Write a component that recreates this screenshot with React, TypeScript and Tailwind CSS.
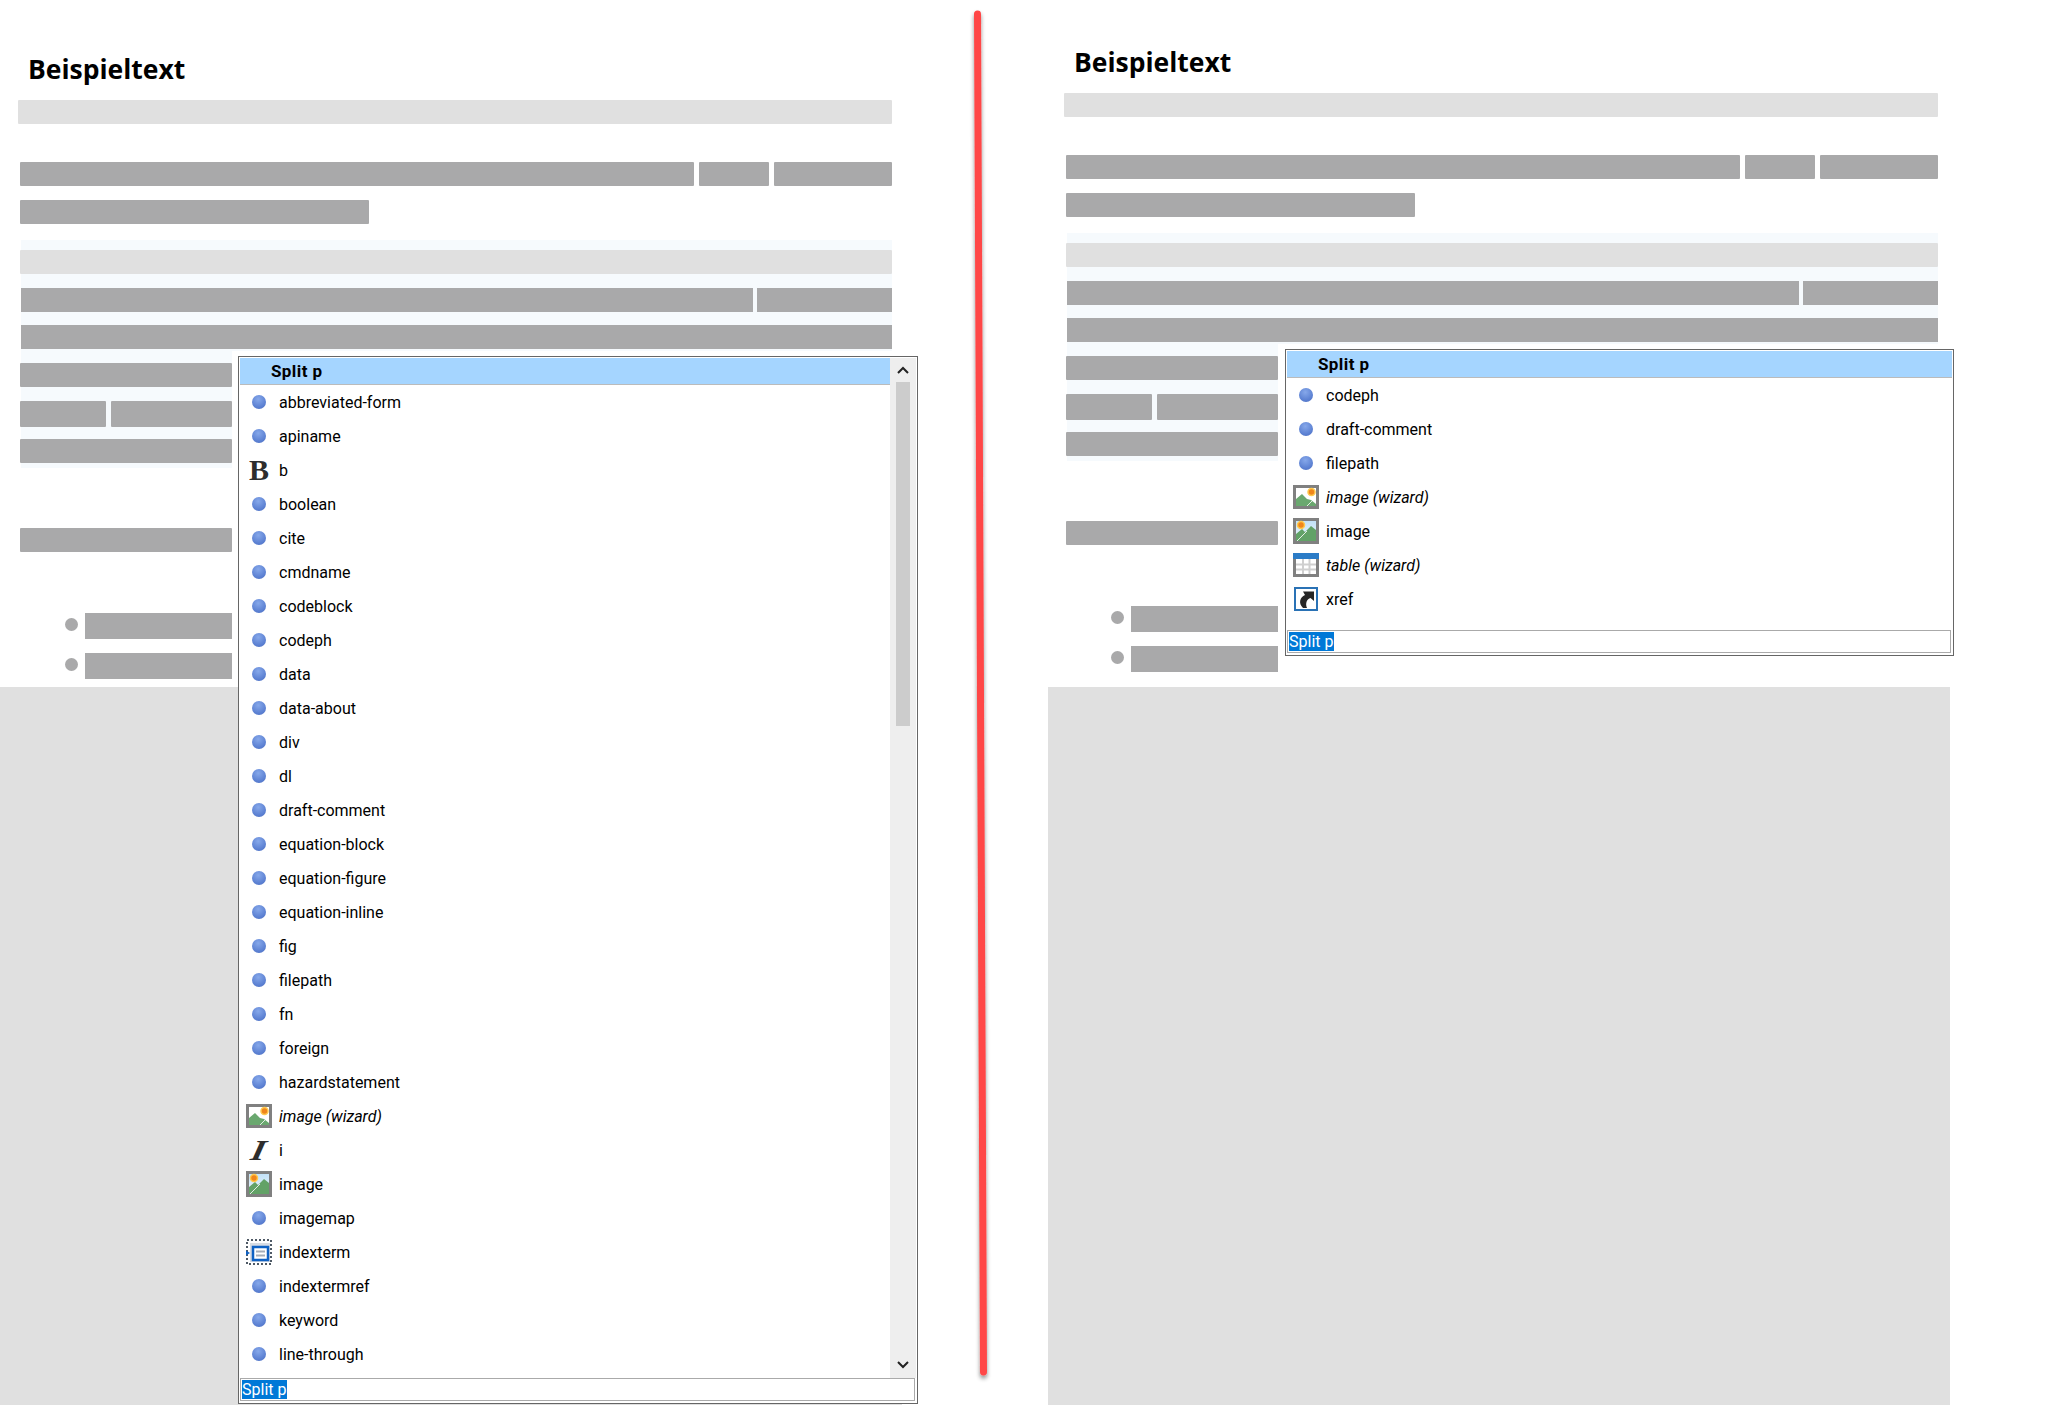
const uiFont = "font-['Roboto','Noto_Sans',sans-serif]";

type Item = {
  name: string;
  icon?: 'dot' | 'b' | 'i' | 'wizardImage' | 'image' | 'indexterm' | 'table' | 'xref';
  italic?: boolean;
};

const leftItems: Item[] = [
  { name: 'abbreviated-form' },
  { name: 'apiname' },
  { name: 'b', icon: 'b' },
  { name: 'boolean' },
  { name: 'cite' },
  { name: 'cmdname' },
  { name: 'codeblock' },
  { name: 'codeph' },
  { name: 'data' },
  { name: 'data-about' },
  { name: 'div' },
  { name: 'dl' },
  { name: 'draft-comment' },
  { name: 'equation-block' },
  { name: 'equation-figure' },
  { name: 'equation-inline' },
  { name: 'fig' },
  { name: 'filepath' },
  { name: 'fn' },
  { name: 'foreign' },
  { name: 'hazardstatement' },
  { name: 'image (wizard)', icon: 'wizardImage', italic: true },
  { name: 'i', icon: 'i' },
  { name: 'image', icon: 'image' },
  { name: 'imagemap' },
  { name: 'indexterm', icon: 'indexterm' },
  { name: 'indextermref' },
  { name: 'keyword' },
  { name: 'line-through' },
];

const rightItems: Item[] = [
  { name: 'codeph' },
  { name: 'draft-comment' },
  { name: 'filepath' },
  { name: 'image (wizard)', icon: 'wizardImage', italic: true },
  { name: 'image', icon: 'image' },
  { name: 'table (wizard)', icon: 'table', italic: true },
  { name: 'xref', icon: 'xref' },
];

const ItemIcon = ({ icon = 'dot' }: { icon?: Item['icon'] }) => {
  if (icon === 'b') {
    return <span className="font-['Liberation_Serif',serif] text-[30px] leading-none font-bold text-[#2d2d2d]">B</span>;
  }
  if (icon === 'i') {
    return (
      <span className="scale-x-125 skew-x-[-10deg] font-['Liberation_Serif',serif] text-[29px] leading-none font-bold italic text-[#2d2d2d]">
        I
      </span>
    );
  }
  if (icon === 'wizardImage') {
    return (
      <svg width="26" height="24" viewBox="0 0 26 24">
        <rect x="1.5" y="1.5" width="23" height="21" fill="#fff" stroke="#808080" strokeWidth="3" />
        <path d="M3 21V14L9 9L14 14L18 15L23 19V21Z" fill="#6aa86f" />
        <path d="M14 21L19 16" stroke="#e4ece4" strokeWidth="1" />
        <circle cx="18.5" cy="7" r="3.5" fill="#f0861a" stroke="#ffc94d" strokeWidth="1.5" />
      </svg>
    );
  }
  if (icon === 'image') {
    return (
      <svg width="26" height="26" viewBox="0 0 26 26">
        <defs>
          <linearGradient id="sky" x1="0" y1="0" x2="0" y2="1">
            <stop offset="0" stopColor="#bfe0f7" />
            <stop offset="1" stopColor="#f2f8fc" />
          </linearGradient>
        </defs>
        <rect x="1.5" y="1.5" width="23" height="23" fill="url(#sky)" stroke="#808080" strokeWidth="3" />
        <path d="M3 23V16L9 11L12 14L18 8L23 12V23Z" fill="#62a267" />
        <path d="M4 23L14 13" stroke="#e4ece4" strokeWidth="1" />
        <circle cx="8" cy="7" r="3.5" fill="#f0861a" stroke="#ffc94d" strokeWidth="1.5" />
      </svg>
    );
  }
  if (icon === 'indexterm') {
    return (
      <svg width="26" height="26" viewBox="0 0 26 26">
        <rect x="1" y="1" width="24" height="24" fill="none" stroke="#4f5a66" strokeWidth="2" strokeDasharray="2 2" />
        <rect x="4" y="4" width="20" height="19" fill="#d8dde4" />
        <rect x="7" y="8" width="15" height="13" fill="#fff" stroke="#0f62c4" strokeWidth="2.5" />
        <path d="M10 12.5H19M10 16.5H19" stroke="#a5adb8" strokeWidth="2" />
        <path d="M0 11.5L4 14L0 16.5Z" fill="#0f62c4" />
      </svg>
    );
  }
  if (icon === 'table') {
    return (
      <svg width="26" height="24" viewBox="0 0 26 24">
        <rect x="1.5" y="1.5" width="23" height="21" fill="#fff" stroke="#808080" strokeWidth="3" />
        <rect x="0" y="0" width="26" height="6" fill="#2b7cc7" />
        <path d="M3 11.5H23M3 16.5H23M10 6V21M16.5 6V21" stroke="#cfcfcf" strokeWidth="2" />
      </svg>
    );
  }
  if (icon === 'xref') {
    return (
      <svg width="24" height="24" viewBox="0 0 24 24">
        <rect x="1" y="1" width="22" height="22" fill="#fff" stroke="#2a72b5" strokeWidth="2" />
        <path d="M9 21C4 16 6 10 11 8L9 4.5H20V14L16.5 11C13 12 11 16 13 21Z" fill="#262626" />
      </svg>
    );
  }
  return (
    <span className="block size-[14px] rounded-full bg-[radial-gradient(circle_at_45%_30%,#86a8ea,#5b80d2_65%,#4a6cbc)]" />
  );
};

const Popup = ({ items, scroll, className }: { items: Item[]; scroll?: boolean; className: string }) => (
  <div className={`absolute flex flex-col border border-[#666] bg-white p-px pb-[2px] ${uiFont} text-[16px] text-black ${className}`}>
    <div className="flex min-h-0 flex-1">
      <div className="min-w-0 flex-1">
        <div className="flex h-[27px] items-center border-b border-[#bbb] bg-[#a5d5ff] pt-px pl-[31px] text-[17px] font-bold tracking-[0.4px]">
          Split p
        </div>
        {items.map((item) => (
          <div key={item.name} className="flex h-[34px] items-center">
            <div className="mr-px flex w-[38px] shrink-0 justify-center">
              <ItemIcon icon={item.icon} />
            </div>
            <span className={`mt-[2px] ${item.italic ? 'italic' : ''}`}>{item.name}</span>
          </div>
        ))}
      </div>
      {scroll && (
        <div className="flex w-[26px] shrink-0 flex-col items-center bg-[#eee]">
          <svg width="12" height="24" viewBox="0 0 12 24" className="shrink-0">
            <path d="M1 15L6 10L11 15" fill="none" stroke="#222" strokeWidth="2" />
          </svg>
          <div className="h-[344px] w-[14px] bg-[#ccc]" />
          <div className="flex-1" />
          <svg width="12" height="26" viewBox="0 0 12 26" className="shrink-0">
            <path d="M1 10L6 15L11 10" fill="none" stroke="#222" strokeWidth="2" />
          </svg>
        </div>
      )}
    </div>
    <div className="mr-px h-[23px] shrink-0 border border-[#aaa] px-[1px] pt-[1px]">
      <span className="block h-[19px] w-fit bg-[#0078d7] pr-px leading-[20px] text-white">Split p</span>
    </div>
  </div>
);

const Bar = ({ className }: { className: string }) => <div className={`h-[24px] rounded-[1px] bg-[#a9a9aa] ${className}`} />;

const Bullet = () => (
  <div className="flex items-start">
    <span className="mt-[5px] ml-[65px] size-[13px] rounded-full bg-[#a9a9aa]" />
    <span className="ml-[7px] h-[26px] w-[147px] bg-[#a9a9aa]" />
  </div>
);

const DocPanel = ({ topPad, grayShift }: { topPad: string; grayShift: string }) => (
  <div className="w-[906px] shrink-0">
    <div className={`h-[687px] ${topPad}`}>
      <h1 className="pl-[28px] font-['Open_Sans',sans-serif] text-[26.5px] leading-[36px] font-bold text-black">Beispieltext</h1>
      <div className="mt-[13px] ml-[18px] h-[24px] w-[874px] rounded-[1px] bg-[#e0e0e0]" />
      <div className="mt-[38px] ml-[20px] flex w-[872px] gap-[5px]">
        <Bar className="w-[674px]" />
        <Bar className="w-[70px]" />
        <Bar className="flex-1" />
      </div>
      <Bar className="mt-[14px] ml-[20px] w-[349px]" />
      <div className="mt-[16px] ml-[21px] w-[871px] bg-[#f6fafd] pt-[10px] pb-[2px]">
        <div className="-ml-px h-[24px] rounded-[1px] bg-[#e0e0e0]" />
        <div className="mt-[14px] flex gap-[4px]">
          <Bar className="w-[732px] rounded-none" />
          <Bar className="flex-1 rounded-none" />
        </div>
        <Bar className="mt-[13px] rounded-none" />
      </div>
      <div className="ml-[21px] w-[211px] bg-[#f6fafd] pt-[12px] pb-[5px]">
        <Bar className="-ml-px w-[212px]" />
        <div className="mt-[14px] -ml-px flex w-[212px] gap-[5px]">
          <div className="h-[26px] w-[86px] rounded-[1px] bg-[#a9a9aa]" />
          <div className="h-[26px] flex-1 rounded-[1px] bg-[#a9a9aa]" />
        </div>
        <Bar className="mt-[12px] -ml-px w-[212px]" />
      </div>
      <Bar className="mt-[60px] ml-[20px] w-[212px]" />
      <div className="mt-[61px] flex flex-col gap-[14px]">
        <Bullet />
        <Bullet />
      </div>
    </div>
    <div className={`h-[718px] w-[902px] bg-[#e0e0e0] ${grayShift}`} />
  </div>
);

export default function App() {
  return (
    <div className="relative flex h-[1405px] w-[2052px] gap-[140px] overflow-hidden bg-white">
      <DocPanel topPad="pt-[51px]" grayShift="" />
      <DocPanel topPad="pt-[44px]" grayShift="ml-[2px]" />
      <Popup items={leftItems} scroll className="top-[356px] left-[238px] h-[1048px] w-[680px]" />
      <Popup items={rightItems} className="top-[349px] left-[1285px] h-[307px] w-[669px]" />
      <svg width="30" height="1400" viewBox="0 0 30 1400" className="absolute top-0 left-[965px]">
        <defs>
          <filter id="lineShadow" x="-200%" y="-2%" width="500%" height="104%">
            <feDropShadow dx="0" dy="3" stdDeviation="2" floodColor="#000" floodOpacity="0.45" />
          </filter>
        </defs>
        <line x1="12.5" y1="14" x2="18.5" y2="1372" stroke="#ff4747" strokeWidth="7" strokeLinecap="round" filter="url(#lineShadow)" />
      </svg>
    </div>
  );
}
